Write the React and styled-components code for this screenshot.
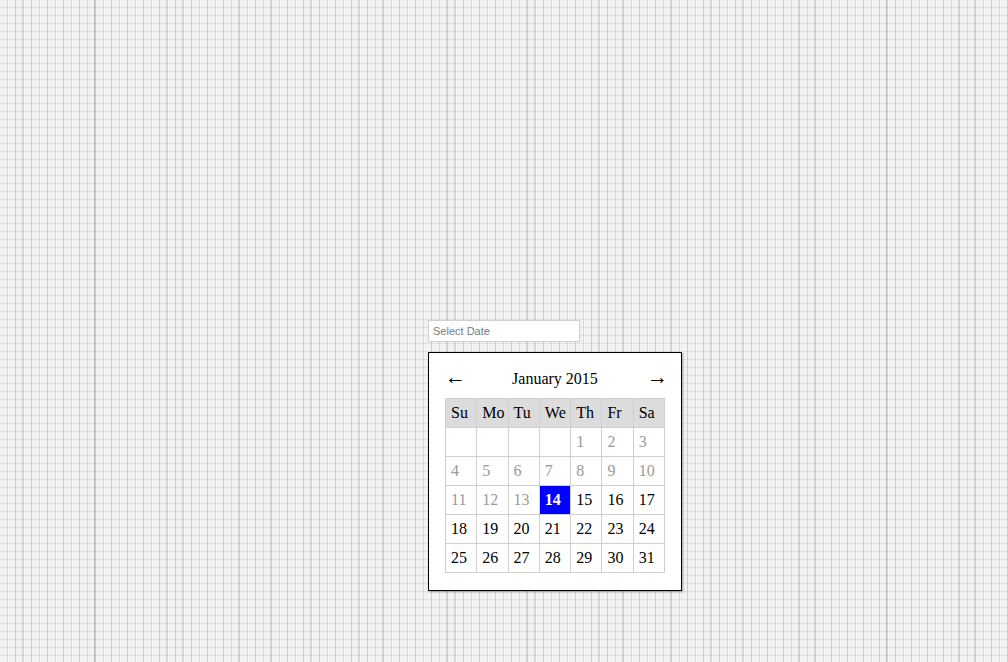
import React from 'react'
import styled, { createGlobalStyle } from 'styled-components'

const GlobalStyle = createGlobalStyle`
    html, body {
        margin: 0;
        padding: 0;
        height: 100%;
    }

    body {
        background-color: #f2f2f2;
        background-image:
            repeating-linear-gradient(90deg, transparent 0 7px, rgba(0,0,0,0.10) 7px 8px),
            repeating-linear-gradient(90deg, transparent 0 71px, rgba(0,0,0,0.12) 71px 72px),
            repeating-linear-gradient(90deg, transparent 0 87px, rgba(0,0,0,0.12) 87px 88px),
            repeating-linear-gradient(90deg, transparent 0 15px, rgba(0,0,0,0.05) 15px 16px),
            repeating-linear-gradient(180deg, transparent 0 7px, rgba(0,0,0,0.07) 7px 8px);
        background-position: 0 0, 23px 0, 7px 0, 0 0, 0 0;
    }

    #root {
        height: 100%;
    }
`

const Page = styled.div`
    height: 100%;
    display: flex;
    align-items: center;
    justify-content: center;
`

const Picker = styled.div`
    position: relative;
    width: 152px;
`

const DateInput = styled.input`
    box-sizing: border-box;
    display: block;
    width: 152px;
    height: 22px;
    margin: 0;
    padding: 0 4px;
    border: 1px solid #d0d0d0;
    background: #fff;
    font-family: "Liberation Sans", Arial, sans-serif;
    font-size: 11px;
    color: #333;
    outline: none;

    &::placeholder {
        color: #7a7a7a;
    }
`

const Popup = styled.div`
    position: absolute;
    top: 32px;
    left: 0;
    box-sizing: border-box;
    width: 254px;
    padding: 16px 16px 17px 16px;
    background: #fff;
    border: 1px solid #000;
    box-shadow: 1px 1px 2px rgba(0, 0, 0, 0.35);
    font-family: "Liberation Serif", "Times New Roman", serif;
    color: #000;
`

const Header = styled.div`
    display: flex;
    align-items: flex-start;
    justify-content: space-between;
    height: 20px;
    margin-bottom: 9px;
    font-size: 16px;
    line-height: 20px;
`

const Arrow = styled.span`
    display: block;
    height: 20px;
    font-size: 21px;
    line-height: 16px;
    width: 18px;
    text-align: ${p => (p.right ? 'right' : 'left')};
    cursor: pointer;
`

const Month = styled.span`
    flex: 1;
    text-align: center;
`

const Table = styled.table`
    width: 220px;
    table-layout: fixed;
    border-collapse: collapse;
    font-size: 16px;
`

const Cell = styled.td`
    padding: 5px 5px;
    line-height: 18px;
    height: 18px;
    border: 1px solid #cfcfcf;
    text-align: left;
    white-space: nowrap;
    color: ${p => (p.muted ? '#999' : '#000')};
    background: ${p => (p.selected ? '#0000ff' : 'transparent')};

    ${p => p.selected && `
        color: #fff;
        font-weight: bold;
    `}
`

const HeadCell = styled.th`
    padding: 5px 5px;
    line-height: 18px;
    border: 1px solid #cfcfcf;
    background: #dcdcdc;
    text-align: left;
    font-weight: normal;
`

const days = ['Su', 'Mo', 'Tu', 'We', 'Th', 'Fr', 'Sa']
const today = 14

const weeks = (() => {
    const cells = [null, null, null, null]
    for (let d = 1; d <= 31; d++) cells.push(d)
    const rows = []
    for (let i = 0; i < cells.length; i += 7) rows.push(cells.slice(i, i + 7))
    return rows
})()

const App = () => {
    return (
        <Page>
            <GlobalStyle />
            <Picker>
                <DateInput placeholder="Select Date" />
                <Popup>
                    <Header>
                        <Arrow>←</Arrow>
                        <Month>January 2015</Month>
                        <Arrow right>→</Arrow>
                    </Header>
                    <Table>
                        <thead>
                            <tr>
                                {days.map(d => <HeadCell key={d}>{d}</HeadCell>)}
                            </tr>
                        </thead>
                        <tbody>
                            {weeks.map((week, i) => (
                                <tr key={i}>
                                    {week.map((d, j) => (
                                        <Cell
                                            key={j}
                                            muted={d !== null && d < today}
                                            selected={d === today}
                                        >
                                            {d}
                                        </Cell>
                                    ))}
                                </tr>
                            ))}
                        </tbody>
                    </Table>
                </Popup>
            </Picker>
        </Page>
    )
}

export default App
